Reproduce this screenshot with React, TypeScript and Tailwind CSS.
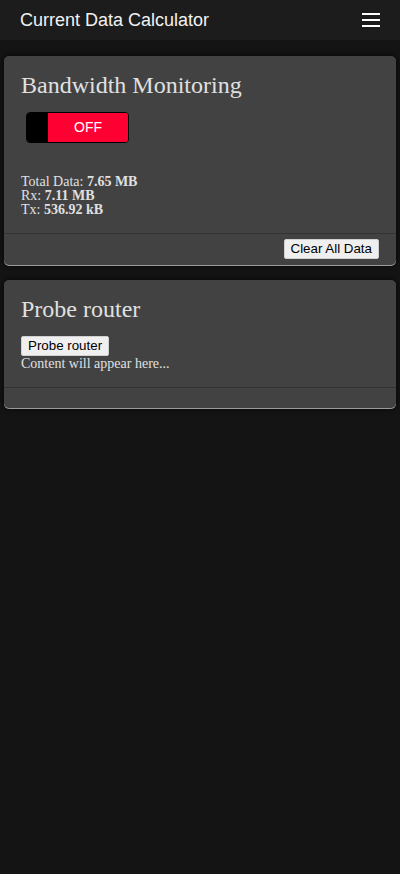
import React from "react";

const sans = { fontFamily: '"Liberation Sans", Arial, sans-serif' };
const serif = { fontFamily: '"Liberation Serif", "Times New Roman", serif' };

function PlainButton({ label }: { label: string }) {
  return (
    <button
      className="h-[20px] px-[6px] rounded-[2px] border border-[#d0d0d0] bg-[#efefef] text-[13.33px] leading-[16px] text-black"
      style={sans}
    >
      {label}
    </button>
  );
}

function Card({
  children,
  footer,
  className = "",
}: {
  children: React.ReactNode;
  footer?: React.ReactNode;
  className?: string;
}) {
  return (
    <section
      className={`mx-1 rounded-[5px] bg-[#424242] shadow-[0_1px_0_#9a9a9a,0_0_6px_rgba(0,0,0,0.9)] ${className}`}
    >
      <div className="px-[17px] pt-[15px] text-[#e0e0e0]" style={serif}>
        {children}
      </div>
      <div className="border-t border-[#333333]" />
      <div className="flex justify-end px-[17px] pt-[5px] pb-[6px] min-h-[20px]">
        {footer}
      </div>
    </section>
  );
}

export default function App() {
  return (
    <div className="min-h-[874px] w-full bg-[#141414]">
      {/* Top bar */}
      <header className="h-10 bg-[#1c1c1c] flex items-center justify-between pl-5 pr-5">
        <h1 className="text-[18px] leading-[20px] text-[#f2f2f2]" style={sans}>
          Current Data Calculator
        </h1>
        <button aria-label="Menu" className="flex flex-col gap-[4px] w-[18px]">
          <span className="block h-[2px] w-full bg-white" />
          <span className="block h-[2px] w-full bg-white" />
          <span className="block h-[2px] w-full bg-white" />
        </button>
      </header>

      <Card className="mt-4" footer={<PlainButton label="Clear All Data" />}>
        <h2 className="text-[24px] leading-[28px]">Bandwidth Monitoring</h2>

        {/* Toggle */}
        <div className="mt-[13px] ml-[5px] w-[103px] h-[31px] flex overflow-hidden rounded-[4px] border border-black">
          <div className="w-[21px] bg-black" />
          <div
            className="flex-1 bg-[#ff0033] flex items-center justify-center text-[14px] text-white"
            style={sans}
          >
            OFF
          </div>
        </div>

        <div className="mt-[32px] pb-[16px] text-[14px] leading-[14px]">
          <div>
            Total Data: <b>7.65 MB</b>
          </div>
          <div>
            Rx: <b>7.11 MB</b>
          </div>
          <div>
            Tx: <b>536.92 kB</b>
          </div>
        </div>
      </Card>

      <Card className="mt-[15px]">
        <h2 className="text-[24px] leading-[28px]">Probe router</h2>
        <div className="mt-[13px] flex">
          <PlainButton label="Probe router" />
        </div>
        <p className="text-[14px] leading-[16px] pb-[15px]">
          Content will appear here...
        </p>
      </Card>
    </div>
  );
}
